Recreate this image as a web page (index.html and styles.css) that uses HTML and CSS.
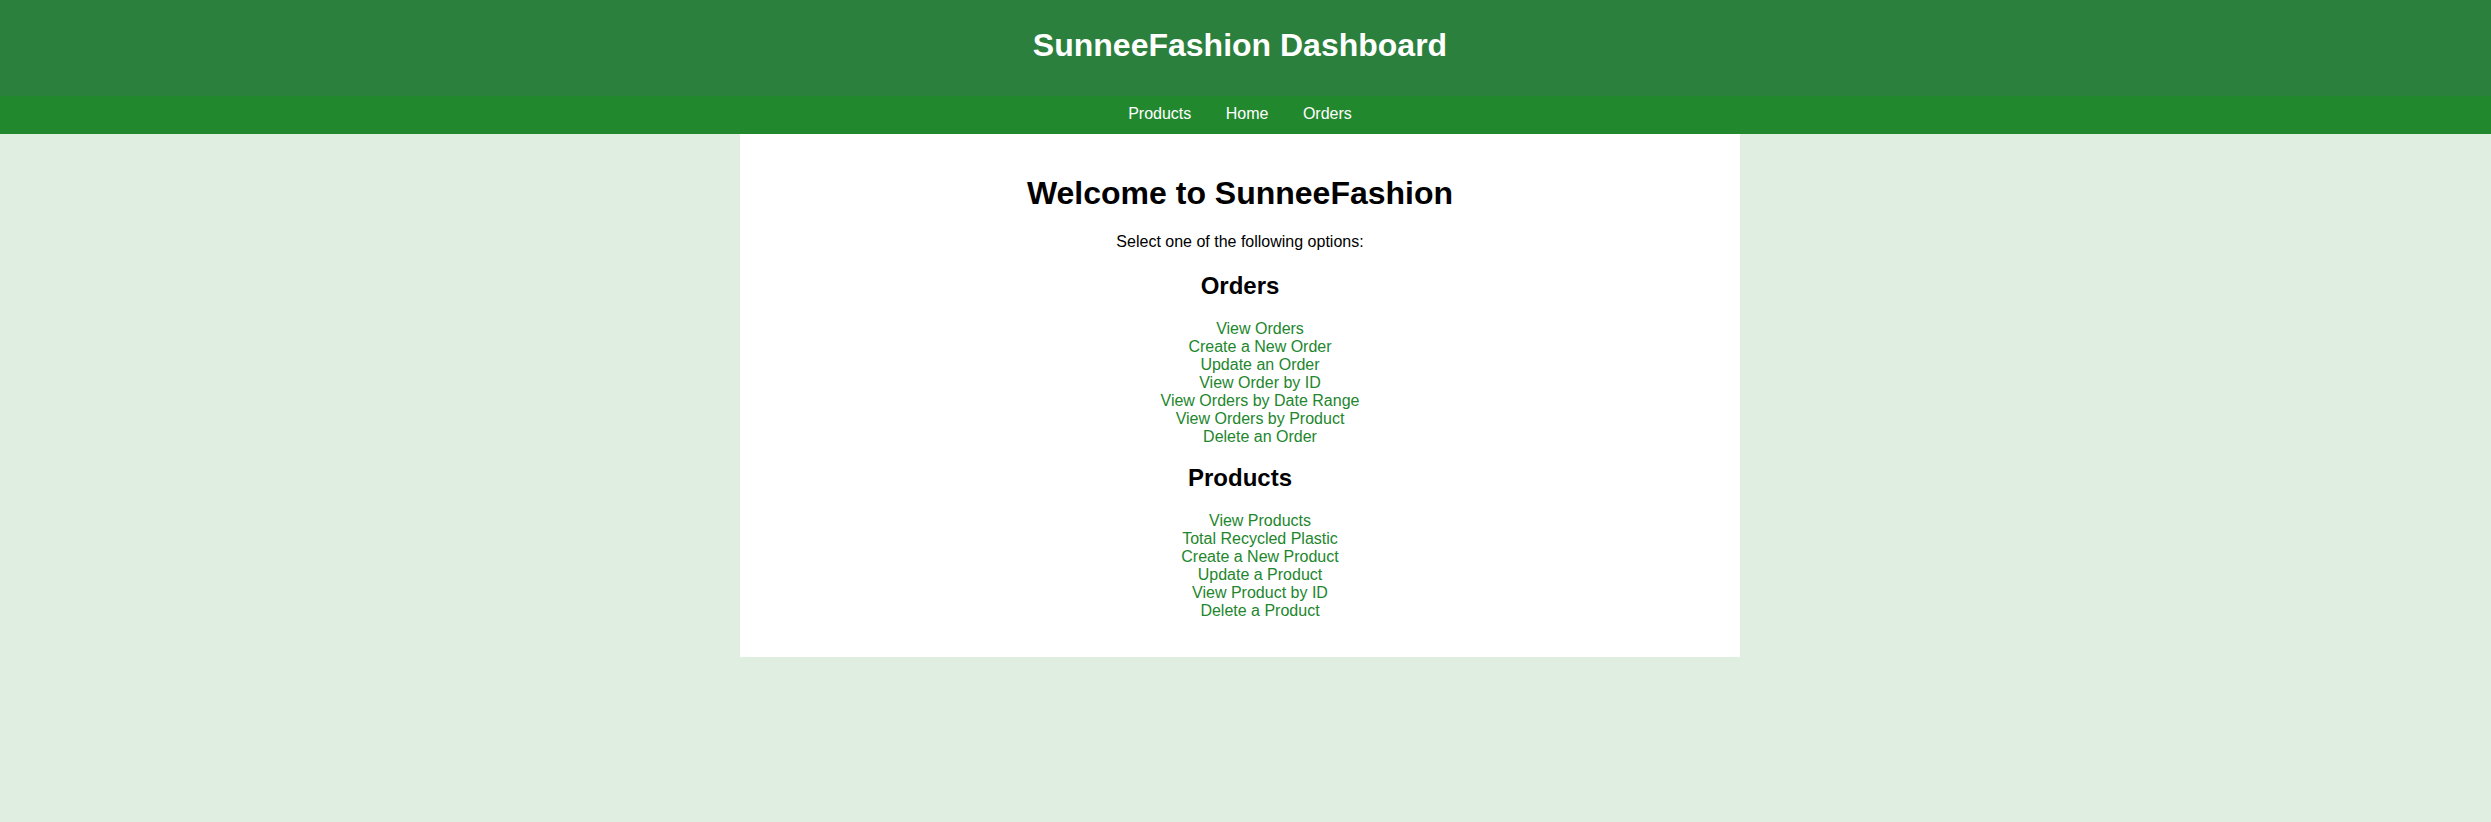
FILE: index.html
```html
<!DOCTYPE html>
<html lang="en">
<head>
<meta charset="utf-8">
<title>SunneeFashion Dashboard</title>
<link rel="stylesheet" href="styles.css">
</head>
<body>
<header class="site-header">
  <h1 class="site-title">SunneeFashion Dashboard</h1>
</header>
<nav class="site-nav">
  <a class="nav-link" href="#">Products</a>
  <a class="nav-link" href="#">Home</a>
  <a class="nav-link" href="#">Orders</a>
</nav>
<div class="page">
  <main class="content">
    <h1 class="welcome">Welcome to SunneeFashion</h1>
    <p class="intro">Select one of the following options:</p>
    <section class="group">
      <h2 class="group-title">Orders</h2>
      <ul class="link-list">
        <li><a href="#">View Orders</a></li>
        <li><a href="#">Create a New Order</a></li>
        <li><a href="#">Update an Order</a></li>
        <li><a href="#">View Order by ID</a></li>
        <li><a href="#">View Orders by Date Range</a></li>
        <li><a href="#">View Orders by Product</a></li>
        <li><a href="#">Delete an Order</a></li>
      </ul>
    </section>
    <section class="group">
      <h2 class="group-title">Products</h2>
      <ul class="link-list">
        <li><a href="#">View Products</a></li>
        <li><a href="#">Total Recycled Plastic</a></li>
        <li><a href="#">Create a New Product</a></li>
        <li><a href="#">Update a Product</a></li>
        <li><a href="#">View Product by ID</a></li>
        <li><a href="#">Delete a Product</a></li>
      </ul>
    </section>
  </main>
</div>
</body>
</html>
```
FILE: styles.css
```css
html, body {
  margin: 0;
  padding: 0;
}
body {
  font-family: Arial, "Liberation Sans", sans-serif;
  font-size: 16px;
  background: #dfeee0;
  color: #000;
  min-height: 822px;
}
.site-header {
  background: #2b803d;
  color: #fff;
  text-align: center;
  padding: 27px 11px 32px 0;
}
.site-title {
  margin: 0;
  font-size: 32px;
  font-weight: bold;
}
.site-nav {
  background: #22882d;
  text-align: center;
  padding: 9px 11px 11px 0;
  line-height: 18px;
}
.nav-link {
  color: #fff;
  text-decoration: none;
  margin: 0 15px;
}
.page {
  padding-right: 11px;
}
.content {
  box-sizing: border-box;
  width: 1000px;
  margin: 0 auto;
  background: #fff;
  padding: 20px;
  text-align: center;
}
.welcome {
  font-size: 32px;
  margin: 21px 0;
}
.intro {
  margin: 16px 0 21px;
}
.group-title {
  font-size: 24px;
  margin: 18px 0 20px;
}
.link-list {
  list-style: none;
  margin: 16px 0;
  padding: 0 0 0 40px;
  line-height: 18px;
}
.group:last-child .link-list {
  margin-bottom: 17px;
}
.link-list a {
  color: #22862d;
  text-decoration: none;
}
```
